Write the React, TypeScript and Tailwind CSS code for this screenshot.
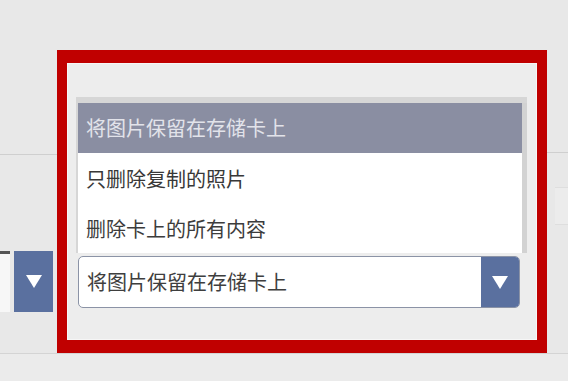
import React from "react";

const font = { fontFamily: '"Noto Sans CJK SC", "Noto Sans", sans-serif' };

function Tri() {
  return (
    <svg width="16" height="13" viewBox="0 0 16 13">
      <polygon points="0,0 16,0 8,13" fill="#ffffff" />
    </svg>
  );
}

export default function App() {
  return (
    <div className="w-[568px] h-[381px] bg-[#e8e8e8] flex flex-col overflow-hidden" style={font}>
      <div className="flex h-[354px] border-b border-[#d4d4d4]">
        {/* left column */}
        <div className="w-[57px] flex flex-col">
          <div className="h-[155px] border-b border-[#cfcfcf] shrink-0" />
          <div className="h-[96px] shrink-0" />
          <div className="flex h-[61px] gap-[4px]">
            <div className="w-[10px] bg-[#f7f7f7] border-t-[3px] border-[#555]" />
            <div className="w-[39px] bg-[#5a709f] flex items-center justify-center">
              <Tri />
            </div>
          </div>
        </div>
        {/* frame column */}
        <div className="w-[490px] pt-[50px]">
          <div className="h-[303px] border-x-[10px] border-y-[13px] border-[#c00000] bg-[#ededed]">
            <div className="h-full border border-[#f6f6f6] pl-[8px] pr-[9px] pt-[33px]">
              <div className="border-t-[6px] border-l-[2px] border-[#d6d6d6] bg-white flex">
                <div className="flex-1 flex flex-col text-[20px] leading-none">
                  <div className="h-[50px] bg-[#8a8ea2] text-[#e2e3ea] flex items-center pl-[8px]">
                    将图片保留在存储卡上
                  </div>
                  <div className="h-[51px] text-[#383838] flex items-center pl-[8px]">
                    只删除复制的照片
                  </div>
                  <div className="h-[49px] text-[#3c3c3c] flex items-center pl-[8px]">
                    删除卡上的所有内容
                  </div>
                </div>
                <div className="w-[5px] bg-[#d2d2d2]" />
              </div>
              <div className="mt-[3px] mr-[7px] ml-[2px] h-[52px] rounded-[5px] border-[1.5px] border-[#8b93a6] bg-white flex items-stretch overflow-hidden">
                <div className="flex-1 flex items-center pl-[8px] text-[20px] leading-none text-[#3e3e3e]">
                  将图片保留在存储卡上
                </div>
                <div className="w-[38px] bg-[#5a709f] flex items-center justify-center">
                  <Tri />
                </div>
              </div>
            </div>
          </div>
        </div>
        {/* right column */}
        <div className="flex-1 flex flex-col">
          <div className="h-[153px] border-b border-[#cfcfcf] shrink-0" />
          <div className="h-[34px] shrink-0" />
          <div className="ml-[8px] h-[38px] bg-[#ececec] border-y border-[#dedede]" />
        </div>
      </div>
      <div className="flex-1 bg-[#ebebeb]" />
    </div>
  );
}
